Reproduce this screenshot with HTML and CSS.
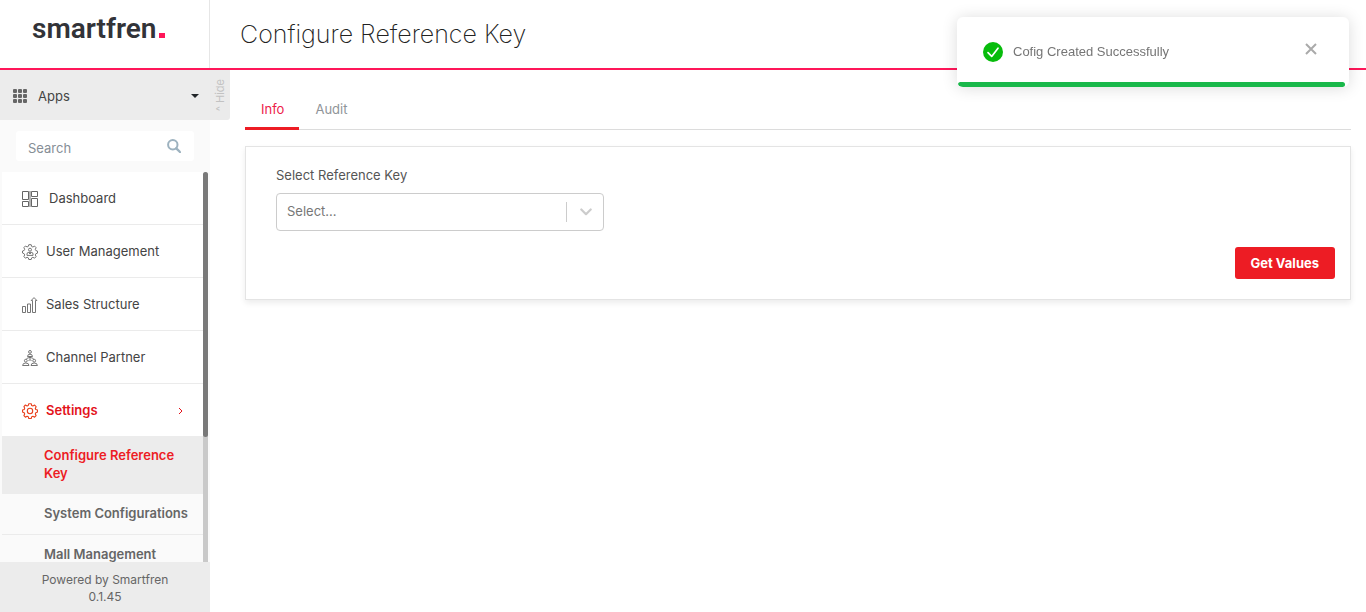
FILE: index.html
```html
<!DOCTYPE html>
<html lang="en">
<head>
<meta charset="utf-8">
<meta name="viewport" content="width=device-width, initial-scale=1">
<title>Configure Reference Key</title>
<link rel="stylesheet" href="styles.css">
</head>
<body>
<div class="app">
  <header class="header">
    <a class="logo" href="#">smartfren<span class="logo-dot"></span></a>
    <h1 class="title">Configure Reference Key</h1>
  </header>
  <div class="body">
    <aside class="sidebar">
      <button class="apps" type="button">
        <svg class="apps-grid" width="14" height="14" viewBox="0 0 14 14" fill="currentColor" aria-hidden="true">
          <rect x="0" y="0" width="4" height="4" rx="1"/><rect x="5" y="0" width="4" height="4" rx="1"/><rect x="10" y="0" width="4" height="4" rx="1"/>
          <rect x="0" y="5" width="4" height="4" rx="1"/><rect x="5" y="5" width="4" height="4" rx="1"/><rect x="10" y="5" width="4" height="4" rx="1"/>
          <rect x="0" y="10" width="4" height="4" rx="1"/><rect x="5" y="10" width="4" height="4" rx="1"/><rect x="10" y="10" width="4" height="4" rx="1"/>
        </svg>
        <span class="apps-label">Apps</span>
        <svg width="8" height="4" viewBox="0 0 8 4" fill="#212529" aria-hidden="true"><path d="M0 0h8L4 4z"/></svg>
      </button>
      <button class="hide-tab" type="button"><span class="hide-text">^ Hide</span></button>
      <form class="search">
        <input class="search-input" type="text" placeholder="Search" aria-label="Search">
        <button class="search-button" type="button" aria-label="Search">
          <svg width="14" height="14" viewBox="0 0 14 14" fill="none" stroke="#9db2bf" aria-hidden="true"><circle cx="5.8" cy="5.8" r="4.7" stroke-width="2"/><path d="M9.3 9.3l3.7 3.7" stroke-width="2.4" stroke-linecap="round"/></svg>
        </button>
      </form>
      <div class="menu-wrap">
        <nav class="menu">
          <a class="item item-wide" href="#">
            <svg class="icon" viewBox="0 0 16 16" fill="none" stroke="currentColor" aria-hidden="true"><path d="M7.5 0v16M8.5 0v16" stroke="#b5b5b5"/><path d="M.5.5h6v8h-6zM9.5.5h6v5h-6zM.5 10.5h6v5h-6zM9.5 7.5h6v8h-6z"/></svg>
            <span>Dashboard</span>
          </a>
          <a class="item" href="#">
            <svg class="icon" viewBox="0 0 16 16" fill="none" stroke="currentColor" stroke-width=".9" stroke-linejoin="round" aria-hidden="true"><path d="M6.8.7h2.4l.5 1.8 1.2.5 1.7-.9 1.5 1.6-.8 1.7.5 1.1 1.7.6v2l-1.7.7-.5 1.1.8 1.7-1.5 1.6-1.7-.9-1.2.5-.5 1.7H6.8l-.5-1.7-1.2-.5-1.7.9-1.5-1.6.8-1.7-.5-1.1L.5 9V7l1.7-.6.5-1.1-.8-1.7 1.5-1.6 1.700.9 1.200-.5z"/><circle cx="8" cy="5.7" r="1.5"/><path d="M5 11.4V10q0-1.600 1.500-1.600h3Q11 8.400 11 10v1.400zM6.700 8.500 8 10l1.300-1.500"/></svg>
            <span>User Management</span>
          </a>
          <a class="item" href="#">
            <svg class="icon" viewBox="0 0 16 16" fill="none" stroke="currentColor" stroke-width=".9" aria-hidden="true"><path d="M.5 9.500h3v6h-3zM5.500 7h3v8.500h-3zM10.500 15.500V3.500H9.200L12 .6l2.900 2.900h-1.400v12z"/></svg>
            <span>Sales Structure</span>
          </a>
          <a class="item" href="#">
            <svg class="icon" viewBox="0 0 16 16" fill="none" stroke="currentColor" stroke-width=".9" aria-hidden="true"><circle cx="8" cy="1.900" r="1.400"/><path d="M5.500 6.500q0-2.300 2.500-2.300t2.500 2.300zM8 6.500v3M4.500 8.500 8 7.300l3.500 1.200"/><circle cx="3.800" cy="10.700" r="1.400"/><circle cx="12.200" cy="10.700" r="1.400"/><path d="M.6 15.500q0-2.500 3.200-2.500t3.200 2.500zM9 15.500q0-2.500 3.200-2.500t3.200 2.500zM6.500 11 8 9.500 9.500 11"/></svg>
            <span>Channel Partner</span>
          </a>
          <a class="item item-open" href="#">
            <svg class="icon icon-settings" viewBox="0 0 16 16" fill="none" stroke="currentColor" stroke-width="1.100" stroke-linejoin="round" aria-hidden="true"><path d="M6.800.7h2.400l.5 1.800 1.200.5 1.700-.9 1.500 1.600-.8 1.700.5 1.100 1.700.6v2l-1.700.7-.5 1.100.8 1.700-1.500 1.600-1.700-.9-1.200.5-.5 1.700H6.800l-.5-1.700-1.200-.5-1.700.9-1.500-1.600.8-1.700-.5-1.100L.5 9V7l1.700-.6.5-1.100-.8-1.700 1.500-1.600 1.700.9 1.200-.5z"/><circle cx="8" cy="8" r="2.700"/></svg>
            <span>Settings</span>
            <svg class="item-arrow" width="5" height="8" viewBox="0 0 5 8" fill="none" stroke="currentColor" aria-hidden="true"><path d="M1 1l3 3-3 3"/></svg>
          </a>
          <a class="sub sub-active" href="#">Configure Reference Key</a>
          <a class="sub" href="#">System Configurations</a>
          <a class="sub" href="#">Mall Management</a>
        </nav>
        <div class="track"><div class="thumb"></div></div>
      </div>
      <footer class="footer">Powered by Smartfren<br>0.1.45</footer>
    </aside>
    <main class="main">
      <div class="tabs">
        <a class="tab tab-active" href="#">Info</a>
        <a class="tab" href="#">Audit</a>
      </div>
      <section class="card">
        <div class="field">
          <label class="label" for="refkey">Select Reference Key</label>
          <div class="select-box">
            <select class="select" id="refkey"><option>Select...</option></select>
            <span class="select-end" aria-hidden="true"><svg width="12" height="8" viewBox="0 0 12 8" fill="none" stroke="#ccc" stroke-width="2.200" stroke-linecap="round" stroke-linejoin="round"><path d="M1.300 1.500 6 6.200l4.700-4.700"/></svg></span>
          </div>
        </div>
        <div class="actions"><button class="primary" type="button">Get Values</button></div>
      </section>
    </main>
  </div>
</div>
<div class="toast" role="status">
  <div class="toast-body">
    <svg width="20" height="20" viewBox="0 0 20 20" aria-hidden="true"><circle cx="10" cy="10" r="10" fill="#07bc0c"/><path d="M5 10.700l3.700 3.700 6.300-8.200" fill="none" stroke="#fff" stroke-width="1.700" stroke-linecap="round" stroke-linejoin="round"/></svg>
    <span class="toast-text">Cofig Created Successfully</span>
    <button class="toast-close" type="button" aria-label="Close"><svg width="12" height="12" viewBox="0 0 12 12" stroke="#aaa" stroke-width="2" aria-hidden="true"><path d="M1 1l10 10M11 1 1 11"/></svg></button>
  </div>
  <div class="toast-progress"></div>
</div>
</body>
</html>
```
FILE: styles.css
```css
* { box-sizing: border-box; }
body {
  margin: 0;
  font-family: Inter, "Open Sans", sans-serif;
  font-size: 13px;
  line-height: 18px;
  color: #444;
  background: #fff;
}
a { color: inherit; text-decoration: none; }
button { border: 0; background: none; padding: 0; font: inherit; color: inherit; cursor: pointer; }
.app { display: flex; flex-direction: column; height: 100vh; }

.header { display: flex; flex: none; height: 70px; border-bottom: 2px solid #ff1659; }
.logo {
  display: flex;
  align-items: baseline;
  gap: 3px;
  width: 210px;
  padding: 11px 0 0 32px;
  border-right: 1px solid #e6e6e6;
  font: 600 28px/36px Roboto, sans-serif;
  color: #323338;
}
.logo-dot { width: 6px; height: 5px; background: #ff1659; }
.title { margin: 0; padding: 18px 0 0 30px; font-size: 25px; line-height: 32px; font-weight: 200; color: #222; }

.body { display: flex; flex: 1; min-height: 0; }
.sidebar { position: relative; display: flex; flex: none; flex-direction: column; width: 210px; background: #fafafa; }
.apps { display: flex; flex: none; align-items: center; height: 50px; padding: 2px 11px 0 13px; background: #ececec; text-align: left; }
.apps-grid { color: #666; }
.apps-label { flex: 1; padding-left: 11px; }
.hide-tab {
  position: absolute;
  left: 100%;
  top: 0;
  display: flex;
  align-items: center;
  justify-content: center;
  width: 20px;
  height: 50px;
  background: #ebebeb;
  border-radius: 0 0 3px 0;
  color: #c2c2c2;
  font-size: 11px;
}
.hide-text { writing-mode: vertical-rl; transform: rotate(180deg); }

.search { display: flex; flex: none; height: 30px; margin: 11px 16px; background: #fff; border-radius: 3px; }
.search-input { flex: 1; min-width: 0; padding: 3px 12px 0; border: 0; background: none; font: inherit; color: #444; }
.search-input::placeholder { color: #868e96; }
.search-button { display: flex; align-items: center; padding: 0 13px 0 0; }

.menu-wrap { display: flex; flex: 1; min-height: 0; padding: 0 2px; }
.menu { flex: 1; overflow: hidden; }
.item { display: flex; align-items: center; gap: 8px; height: 53px; padding: 0 20px; border-bottom: 1px solid #ebebeb; background: #fff; }
.item-wide { gap: 11px; }
.icon { flex: none; width: 16px; height: 16px; margin-top: 2px; color: #666; }
.item-open { height: 52px; border-bottom: 0; color: #e3131b; font-weight: 600; }
.icon-settings { color: #e8401c; }
.item-arrow { margin: 2px 0 0 auto; }
.sub { display: block; padding: 10px 8px 12px 42px; border-bottom: 1px solid #ebebeb; font-weight: 600; color: #666; }
.sub-active { border-bottom: 0; background: #ececec; color: #ed1c24; }
.track { flex: none; width: 5px; background: #c9c9c9; border-radius: 3px 3px 0 0; }
.thumb { height: 68%; background: #797979; border-radius: 3px; }
.footer { flex: none; height: 50px; padding: 9px 0 0; background: #ececec; font-size: 12px; line-height: 17px; text-align: center; color: #666; }

.main { flex: 1; min-width: 0; padding: 20px 15px 0 35px; }
.tabs { display: flex; border-bottom: 1px solid #dcdcdc; }
.tab { height: 40px; padding: 10px 15px 0 16px; margin-bottom: -1px; color: #8f9498; }
.tab-active { border-bottom: 3px solid #ed1c24; color: #ed1c4b; }
.card { margin-top: 16px; padding: 19px 15px 20px 30px; border: 1px solid #e4e4e4; box-shadow: 0 3px 6px rgba(0, 0, 0, .08); }
.field { width: 328px; max-width: 100%; }
.label { display: block; color: #555; }
.select-box { display: flex; position: relative; margin-top: 9px; }
.select { appearance: none; width: 100%; height: 38px; padding: 0 46px 2px 10px; border: 1px solid #ccc; border-radius: 4px; background: #fff; font: inherit; color: #777; }
.select-end { position: absolute; top: 9px; right: 0; display: flex; align-items: center; justify-content: center; width: 38px; height: 20px; border-left: 1px solid #ccc; pointer-events: none; }
.actions { display: flex; justify-content: flex-end; margin-top: 16px; }
.primary { height: 32px; padding: 0 16px; border-radius: 3px; background: #ed1c24; font-weight: 700; color: #fff; }

.toast { position: fixed; top: 17px; right: 17px; width: 392px; background: #fff; border-radius: 6px; box-shadow: 0 1px 16px rgba(0, 0, 0, .14); overflow: hidden; }
.toast-body { display: flex; align-items: center; gap: 10px; padding: 24px 32px 20px 26px; height: 65px; }
.toast-text { flex: 1; font: 13px/20px "Liberation Sans", Arial, sans-serif; color: #757575; }
.toast-close { display: flex; align-self: flex-start; padding-top: 2px; }
.toast-progress { height: 5px; margin: 0 4px 0 1px; background: #19b84a; border-radius: 3px; }
```
